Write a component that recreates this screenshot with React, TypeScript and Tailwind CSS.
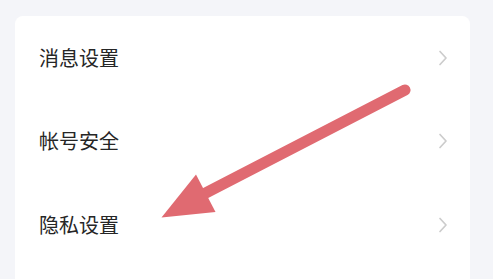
import React from "react";

const Chevron = () => (
  <svg width="10" height="16" viewBox="0 0 10 16" fill="none">
    <path d="M2 1.5 L8 8 L2 14.5" stroke="#cccccc" strokeWidth="1.7" strokeLinecap="round" strokeLinejoin="round" />
  </svg>
);

const rows = ["消息设置", "帐号安全", "隐私设置"];

export default function App() {
  return (
    <div className="relative w-[498px] h-[279px] overflow-hidden bg-white flex" style={{ fontFamily: '"Noto Sans CJK SC", "Noto Sans", sans-serif' }}>
      <div className="w-[493px] h-full bg-[#f4f5f9] pt-4 pl-[15px] pr-[23px]">
        <div className="bg-white rounded-t-lg h-full">
          {rows.map((r) => (
            <div key={r} className="h-[83.5px] flex items-center justify-between pl-6 pr-[22px]">
              <span className="text-[20px] text-[#262626] leading-none">{r}</span>
              <Chevron />
            </div>
          ))}
        </div>
      </div>
      <svg className="absolute left-0 top-0" width="498" height="279" viewBox="0 0 498 279">
        <line x1="405" y1="90" x2="196" y2="198" stroke="#e06a71" strokeWidth="11" strokeLinecap="round" />
        <polygon points="161.5,217.5 196,174.5 215.5,212" fill="#e06a71" />
      </svg>
    </div>
  );
}
